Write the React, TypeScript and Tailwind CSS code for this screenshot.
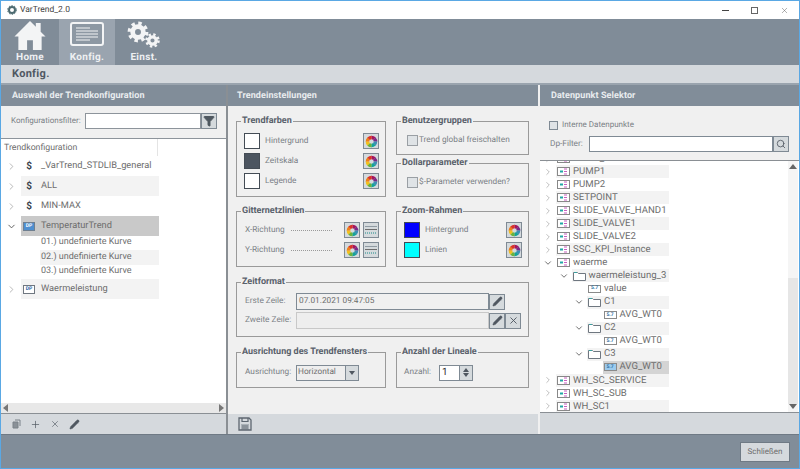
import React from "react";
import { Pencil, X, Plus, Search, ChevronRight, ChevronDown, Filter } from "lucide-react";

function Wheel() {
  const colors = ["#a3155f", "#7a2a86", "#3b8fb5", "#14a39a", "#6cb33f", "#f2c01e", "#ef7d1a", "#d8322b"];
  const c = 2 * Math.PI * 4;
  return (
    <svg width="13" height="13" viewBox="0 0 13 13">
      {colors.map((col, i) => (
        <circle key={i} cx="6.5" cy="6.5" r="4" fill="none" stroke={col} strokeWidth="3.6" strokeDasharray={`${c / 8 + 0.1} ${c}`} transform={`rotate(${i * 45 - 90} 6.5 6.5)`} />
      ))}
    </svg>
  );
}

function IconBtn({ children }: { children: React.ReactNode }) {
  return <div className="w-[16px] h-[16px] shrink-0 flex items-center justify-center bg-[#d5dadd] border border-[#7f8a94]">{children}</div>;
}

function LineIcon() {
  return (
    <svg width="12" height="10" viewBox="0 0 12 10">
      <path d="M0 1.5h12" stroke="#8f9aa2" />
      <path d="M0 4.5h12" stroke="#6d6d6d" />
      <path d="M0 8h12" stroke="#1f8a8a" strokeDasharray="1 1" />
    </svg>
  );
}

function Group({ title, className, inner = "", children }: { title: string; className: string; inner?: string; children: React.ReactNode }) {
  return (
    <fieldset className={`border border-[#9a9a9a] min-w-0 ${className}`}>
      <legend className="ml-[4px] px-[1px] text-[9px] leading-[10px] font-bold text-[#59616b]">{title}</legend>
      <div className={inner}>{children}</div>
    </fieldset>
  );
}

function Swatch({ color, label }: { color: string; label: string }) {
  return (
    <div className="flex items-center h-[20px] pl-[7px] pr-[6px]">
      <div className="w-[16px] h-[16px] border border-[#444c55]" style={{ background: color }} />
      <span className="ml-[5px] flex-1 text-[#7a7f85] text-[8.25px]">{label}</span>
      <IconBtn><Wheel /></IconBtn>
    </div>
  );
}

function Check({ label }: { label: string }) {
  return (
    <div className="flex items-center">
      <div className="w-[11px] h-[11px] bg-[#dfe3e6] border border-[#9a9fa4]" />
      <span className="ml-[1px] text-[8.25px] text-[#7a7f85]">{label}</span>
    </div>
  );
}

function Header({ text, className = "" }: { text: string; className?: string }) {
  return (
    <div className={`h-[21px] shrink-0 bg-[#818d99] flex items-center pt-[2px] text-[9px] font-bold tracking-[0.1px] text-[#e9ecef] ${className}`}>
      {text}
    </div>
  );
}

function Dp({ active = true }: { active?: boolean }) {
  return (
    <span className={`inline-flex items-center justify-center w-[12px] h-[9px] border ${active ? "border-[#6f7f90] bg-[#4f8fd0] text-white" : "border-[#6f7780] bg-white text-[#2a5f9f]"} text-[5px] font-bold leading-none`}>DP</span>
  );
}

function Dollar() {
  return <span className="text-[10px] font-bold text-[#3f4650]">$</span>;
}

function LeftRow({ icon, label, open, bg }: { icon: React.ReactNode; label: string; open?: boolean; bg?: string }) {
  return (
    <div className="flex items-center h-[20px] shrink-0">
      <div className="w-[20px] flex justify-center">
        {open ? <ChevronDown size={11} strokeWidth={2} color="#555" /> : <ChevronRight size={11} strokeWidth={1.5} color="#999" />}
      </div>
      <div className={`w-[138px] h-[20px] flex items-center ${bg ?? ""}`}>
        <div className="w-[16px] flex justify-center">{icon}</div>
        <span className="ml-[4px] text-[9.25px] text-[#6d6d6d]">{label}</span>
      </div>
    </div>
  );
}

function SubRow({ label, bg }: { label: string; bg?: string }) {
  return (
    <div className={`ml-[39px] w-[119px] h-[14.4px] shrink-0 flex items-center pl-[1px] text-[9px] text-[#6d6d6d] ${bg ?? ""}`}>{label}</div>
  );
}

function StructIcon() {
  return (
    <svg width="13" height="9" viewBox="0 0 13 9" className="shrink-0">
      <rect x="0.5" y="0.5" width="12" height="8" fill="#fff" stroke="#888" />
      <path d="M3 4.5h3" stroke="#22a6a6" strokeWidth="2" />
      <path d="M7 2h3M7 4.5h3M7 7h3" stroke="#c65fc0" strokeWidth="1" />
    </svg>
  );
}

function FolderIcon() {
  return (
    <svg width="13" height="10" viewBox="0 0 13 10" className="shrink-0">
      <path d="M0.5 1.5h4l1 1h7v7h-12z" fill="#fff" stroke="#6f7780" />
      <path d="M1 1.5h3" stroke="#3aa0a0" />
    </svg>
  );
}

function ValueIcon({ selected }: { selected?: boolean }) {
  return (
    <span className={`inline-flex shrink-0 items-center justify-center w-[13px] h-[8px] border border-[#8a8a8a] ${selected ? "bg-[#9ccbee]" : "bg-white"} text-[#2a6f9f] text-[5px] font-bold leading-none`}>5.7</span>
  );
}

type DpRow = { label: string; indent: number; kind: "s" | "f" | "v"; open?: boolean; leaf?: boolean; bg?: boolean; sel?: boolean };

const dpRows: DpRow[] = [
  { label: "MODE_STATE", indent: 0, kind: "s" },
  { label: "PUMP1", indent: 0, kind: "s", bg: true },
  { label: "PUMP2", indent: 0, kind: "s" },
  { label: "SETPOINT", indent: 0, kind: "s", bg: true },
  { label: "SLIDE_VALVE_HAND1", indent: 0, kind: "s" },
  { label: "SLIDE_VALVE1", indent: 0, kind: "s", bg: true },
  { label: "SLIDE_VALVE2", indent: 0, kind: "s" },
  { label: "SSC_KPI_Instance", indent: 0, kind: "s", bg: true },
  { label: "waerme", indent: 0, kind: "s", open: true },
  { label: "waermeleistung_3", indent: 1, kind: "f", open: true, bg: true },
  { label: "value", indent: 2, kind: "v", leaf: true },
  { label: "C1", indent: 2, kind: "f", open: true, bg: true },
  { label: "AVG_WT0", indent: 3, kind: "v", leaf: true },
  { label: "C2", indent: 2, kind: "f", open: true, bg: true },
  { label: "AVG_WT0", indent: 3, kind: "v", leaf: true },
  { label: "C3", indent: 2, kind: "f", open: true, bg: true },
  { label: "AVG_WT0", indent: 3, kind: "v", leaf: true, sel: true },
  { label: "WH_SC_SERVICE", indent: 0, kind: "s", bg: true },
  { label: "WH_SC_SUB", indent: 0, kind: "s" },
  { label: "WH_SC1", indent: 0, kind: "s", bg: true },
];

function DpTreeRow({ r }: { r: DpRow }) {
  return (
    <div className="flex items-center h-[13.06px]" style={{ paddingLeft: r.indent * 15.5 }}>
      <div className="w-[16px] shrink-0 flex justify-center">
        {r.leaf ? null : r.open ? <ChevronDown size={10} strokeWidth={2} color="#555" /> : <ChevronRight size={10} strokeWidth={1.5} color="#999" />}
      </div>
      <div
        className={`h-[13.06px] flex items-center gap-[3px] pl-[1px] ${r.sel ? "bg-[#d4d4d4]" : r.bg ? "bg-[#f3f3f3]" : ""}`}
        style={{ width: 113 - r.indent * 15.5 }}
      >
        {r.kind === "s" ? <StructIcon /> : r.kind === "f" ? <FolderIcon /> : <ValueIcon selected={r.sel} />}
        <span className="text-[9.6px] text-[#6d6d6d] leading-none">{r.label}</span>
      </div>
    </div>
  );
}

function Gear({ size, r }: { size: number; r: number }) {
  const c = size / 2;
  const circ = 2 * Math.PI * r;
  return (
    <svg width={size} height={size} viewBox={`0 0 ${size} ${size}`}>
      <circle cx={c} cy={c} r={r} fill="none" stroke="#f3f4f5" strokeWidth={r * 0.42} strokeDasharray={`${circ / 16} ${circ / 16}`} />
      <circle cx={c} cy={c} r={r * 0.62} fill="none" stroke="#f3f4f5" strokeWidth={r * 0.55} />
    </svg>
  );
}

function Floppy({ size = 14, color = "#5d6670" }: { size?: number; color?: string }) {
  return (
    <svg width={size} height={size} viewBox="0 0 14 14">
      <path d="M1 1h10l2 2v10H1z" fill="none" stroke={color} strokeWidth="1.3" />
      <path d="M4 1v3.5h6V1" fill="none" stroke={color} strokeWidth="1.2" />
      <path d="M3 7h8v6H3z" fill={color} opacity="0.35" />
      <path d="M4 9h6M4 11h6" stroke={color} strokeWidth="0.8" />
    </svg>
  );
}

function CopyIcon() {
  return (
    <svg width="9" height="10" viewBox="0 0 9 10">
      <path d="M3 1h5v6" fill="none" stroke="#7a8289" />
      <path d="M1 3h5v6H1z" fill="#8a9198" stroke="#7a8289" />
    </svg>
  );
}

export default function App() {
  return (
    <div className="[font-family:Roboto,sans-serif] [text-rendering:geometricPrecision] whitespace-nowrap w-[800px] h-[469px] overflow-hidden flex flex-col bg-[#f0f0f0] border border-[#5aa8e4] text-[#6d6d6d]">
      {/* Title bar */}
      <div className="h-[18px] bg-white flex items-center shrink-0">
        <svg width="10" height="10" viewBox="0 0 10 10" className="ml-[6px]">
          <circle cx="5" cy="5" r="3" fill="none" stroke="#4c6a70" strokeWidth="2" />
          <circle cx="5" cy="5" r="4.4" fill="none" stroke="#4c6a70" strokeWidth="1" strokeDasharray="1.4 1.4" />
        </svg>
        <span className="ml-[3px] text-[8.5px] text-[#444]">VarTrend_2.0</span>
        <div className="ml-auto flex items-center gap-[22px] pr-[10px]">
          <div className="w-[7px] h-px bg-[#444]" />
          <div className="w-[7px] h-[7px] border border-[#666]" />
          <X size={9} strokeWidth={1.2} color="#555" />
        </div>
      </div>

      {/* Toolbar */}
      <div className="h-[46px] bg-[#808c98] flex shrink-0 text-[#eef0f2] text-[10px] font-bold tracking-[0.3px]">
        <div className="w-[58px] flex flex-col items-center">
          <svg width="34" height="32" viewBox="0 0 34 33" className="mt-[1px]">
            <path d="M17 1 L1 17 L5 17 L5 31 L14 31 L14 21 L20 21 L20 31 L29 31 L29 17 L33 17 L28 12 L28 3 L23 3 L23 7 Z" fill="#f3f4f5" />
          </svg>
          <span className="leading-[11px]">Home</span>
        </div>
        <div className="w-[56px] bg-[#9aa4af] flex flex-col items-center">
          <svg width="34" height="25" viewBox="0 0 34 25" className="mt-[3px]">
            <rect x="1" y="1" width="32" height="22" rx="2" fill="#8d98a3" stroke="#f3f4f5" strokeWidth="2" />
            <path d="M6 6h14M6 9h22M6 12h22M6 15h22M6 18h14" stroke="#f3f4f5" strokeWidth="1" />
          </svg>
          <span className="leading-[11px] mt-[5px]">Konfig.</span>
        </div>
        <div className="w-[58px] flex flex-col items-center">
          <div className="relative w-[34px] h-[32px] mt-[1px]">
            <div className="absolute left-[-1px] top-0"><Gear size={24} r={8.6} /></div>
            <div className="absolute left-[17px] top-[12px]"><Gear size={17} r={6} /></div>
          </div>
          <span className="leading-[11px]">Einst.</span>
        </div>
      </div>

      {/* Page title */}
      <div className="h-[20px] bg-[#d5d9dd] border-b-2 border-[#9aa4ae] flex items-center pl-[11px] pt-[1px] text-[11px] font-bold tracking-[0.3px] text-[#4f5762] shrink-0">Konfig.</div>

      {/* Panels */}
      <div className="flex h-[349px] shrink-0">
        {/* Left */}
        <div className="w-[225px] flex flex-col border-r-2 border-[#8a8f94] box-content shrink-0">
          <Header text="Auswahl der Trendkonfiguration" className="pl-[11px]" />
          <div className="h-[32px] flex items-center pl-[10px] pb-[2px] shrink-0">
            <span className="text-[8px] text-[#7a7f85] w-[74px]">Konfigurationsfilter:</span>
            <div className="w-[116px] h-[16px] bg-white border border-[#8d949b]" />
            <div className="w-[16px] h-[16px] bg-[#d5dadd] border border-[#7f8a94] flex items-center justify-center">
              <Filter size={12} fill="#4f5860" color="#4f5860" />
            </div>
          </div>
          <div className="flex-1 bg-white border-t border-[#8d949b] flex flex-col">
            <div className="h-[17px] w-[157px] border-r border-[#e4e4e4] pl-[3px] text-[8.75px] leading-[18px] text-[#6d6d6d] shrink-0">Trendkonfiguration</div>
            <LeftRow icon={<Dollar />} label="_VarTrend_STDLIB_general" />
            <LeftRow icon={<Dollar />} label="ALL" bg="bg-[#f3f3f3]" />
            <LeftRow icon={<Dollar />} label="MIN-MAX" />
            <LeftRow icon={<Dp />} label="TemperaturTrend" open bg="bg-[#c9c9c9]" />
            <SubRow label="01.) undefinierte Kurve" />
            <SubRow label="02.) undefinierte Kurve" bg="bg-[#f3f3f3]" />
            <SubRow label="03.) undefinierte Kurve" />
            <LeftRow icon={<Dp active={false} />} label="Waermeleistung" bg="bg-[#f3f3f3]" />
            <div className="flex-1" />
            <div className="h-[10px] bg-[#e8e8e8] flex items-center justify-between px-[2px] shrink-0">
              <span className="w-0 h-0 border-y-[4px] border-y-transparent border-r-[5px] border-r-[#777]" />
              <span className="w-0 h-0 border-y-[4px] border-y-transparent border-l-[5px] border-l-[#777]" />
            </div>
          </div>
          <div className="h-[21px] bg-[#d5d9dd] border-t border-[#8a8f94] flex items-center pl-[11px] gap-[9px] shrink-0">
            <CopyIcon />
            <Plus size={11} strokeWidth={1.5} color="#4f5760" />
            <X size={10} strokeWidth={1.5} color="#4f5760" />
            <Pencil size={11} fill="#4f5760" color="#4f5760" strokeWidth={1} />
          </div>
        </div>

        {/* Middle */}
        <div className="w-[310px] flex flex-col shrink-0">
          <Header text="Trendeinstellungen" className="pl-[9px]" />
          <div className="flex-1 pl-[8px] pr-[9px] flex flex-col text-[8.25px]">
            <div className="grid grid-cols-[150px_133px] gap-x-[10px] mt-[10px]">
              <Group title="Trendfarben" className="row-span-2 h-[81px]" inner="pt-[5px]">
                <Swatch color="#fff" label="Hintergrund" />
                <Swatch color="#4c5560" label="Zeitskala" />
                <Swatch color="#fff" label="Legende" />
              </Group>
              <Group title="Benutzergruppen" className="h-[39px]" inner="pl-[10px] pt-[8px]">
                <Check label="Trend global freischalten" />
              </Group>
              <Group title="Dollarparameter" className="h-[39px] mt-[3px]" inner="pl-[10px] pt-[8px]">
                <Check label="$-Parameter verwenden?" />
              </Group>
            </div>
            <div className="grid grid-cols-[150px_133px] gap-x-[10px] mt-[9px]">
              <Group title="Gitternetzlinien" className="h-[61px]" inner="pt-[4px]">
                {["X-Richtung", "Y-Richtung"].map((t) => (
                  <div key={t} className="flex items-center h-[20px] pl-[8px] pr-[6px]">
                    <span className="w-[46px] text-[#7a7f85]">{t}</span>
                    <div className="w-[41px] border-t border-dotted border-[#9a9a9a]" />
                    <div className="ml-auto flex gap-[3px]">
                      <IconBtn><Wheel /></IconBtn>
                      <IconBtn><LineIcon /></IconBtn>
                    </div>
                  </div>
                ))}
              </Group>
              <Group title="Zoom-Rahmen" className="h-[61px]" inner="pt-[4px]">
                <Swatch color="#0000ff" label="Hintergrund" />
                <Swatch color="#00ffff" label="Linien" />
              </Group>
            </div>
            <Group title="Zeitformat" className="mt-[10px] h-[60px] w-[293px]" inner="pl-[8px] pt-[5px]">
              <div className="flex items-center h-[19px]">
                <span className="w-[51px] text-[#7a7f85]">Erste Zeile:</span>
                <div className="w-[193px] h-[17px] bg-[#f0f0f0] border border-[#7f8a94] flex items-center pl-[2px] text-[#6d6d6d]">07.01.2021 09:47:05</div>
                <IconBtn><Pencil size={11} fill="#4f5760" color="#4f5760" strokeWidth={1} /></IconBtn>
              </div>
              <div className="flex items-center h-[19px]">
                <span className="w-[51px] text-[#7a7f85]">Zweite Zeile:</span>
                <div className="w-[193px] h-[17px] bg-[#eee] border border-[#c8c8c8]" />
                <IconBtn><Pencil size={11} fill="#4f5760" color="#4f5760" strokeWidth={1} /></IconBtn>
                <IconBtn><X size={11} color="#4f5760" /></IconBtn>
              </div>
            </Group>
            <div className="grid grid-cols-[150px_133px] gap-x-[10px] mt-[10px]">
              <Group title="Ausrichtung des Trendfensters" className="h-[41px]" inner="pl-[8px] pt-[5px]">
                <div className="flex items-center h-[21px]">
                  <span className="w-[51px] text-[#7a7f85]">Ausrichtung:</span>
                  <div className="w-[63px] h-[16px] bg-[#eee] border border-[#7f8a94] flex items-center pl-[1px] text-[#6d6d6d]">
                    <span className="flex-1">Horizontal</span>
                    <span className="w-[13px] h-[14px] bg-[#d5dadd] border-l border-[#7f8a94] flex items-center justify-center">
                      <span className="w-0 h-0 border-x-[3.5px] border-x-transparent border-t-[4px] border-t-[#4f5760]" />
                    </span>
                  </div>
                </div>
              </Group>
              <Group title="Anzahl der Lineale" className="h-[41px]" inner="pl-[7px] pt-[5px]">
                <div className="flex items-center h-[21px]">
                  <span className="w-[35px] text-[#7a7f85]">Anzahl:</span>
                  <div className="w-[21px] h-[16px] bg-white border border-[#7f8a94] flex items-center pl-[2px] text-[10px] text-[#333]">1</div>
                  <div className="w-[13px] h-[16px] bg-[#d5dadd] border border-l-0 border-[#7f8a94] flex flex-col items-center justify-center gap-[1px]">
                    <span className="w-0 h-0 border-x-[3.5px] border-x-transparent border-b-[4px] border-b-[#4f5760]" />
                    <span className="w-0 h-0 border-x-[3.5px] border-x-transparent border-t-[4px] border-t-[#4f5760]" />
                  </div>
                </div>
              </Group>
            </div>
          </div>
          <div className="h-[20px] bg-[#d5d9dd] flex items-center pl-[10px] shrink-0">
            <Floppy />
          </div>
        </div>

        {/* Right */}
        <div className="w-[259px] flex flex-col ml-[2px] shrink-0">
          <Header text="Datenpunkt Selektor" className="pl-[11px]" />
          <div className="h-[54px] shrink-0 pl-[9px] pt-[13px]">
            <div className="flex items-center">
              <div className="w-[9px] h-[9px] bg-[#dfe3e6] border border-[#7f8a94]" />
              <span className="ml-[4px] text-[8px] text-[#7a7f85]">Interne Datenpunkte</span>
            </div>
            <div className="flex items-center mt-[5px]">
              <span className="w-[40px] text-[8.25px] text-[#7a7f85] pl-[1px]">Dp-Filter:</span>
              <div className="w-[184px] h-[16px] bg-white border border-[#7f8a94]" />
              <div className="w-[16px] h-[16px] bg-[#d5dadd] border border-[#7f8a94] flex items-center justify-center">
                <Search size={10} color="#4f5760" />
              </div>
            </div>
          </div>
          <div className="h-[253px] shrink-0 bg-white border-y border-[#8a8f94] flex overflow-hidden">
            <div className="w-[248px] overflow-hidden">
              <div className="mt-[-9px]">
                {dpRows.map((r, i) => <DpTreeRow key={i} r={r} />)}
              </div>
            </div>
            <div className="w-[10px] flex flex-col items-center bg-[#f5f5f5]">
              <span className="mt-[3px] w-0 h-0 border-x-[4px] border-x-transparent border-b-[5px] border-b-[#666]" />
              <div className="flex-1" />
              <div className="w-full h-[126px] bg-[#e6e6e6]" />
              <span className="mb-[3px] w-0 h-0 border-x-[4px] border-x-transparent border-t-[5px] border-t-[#666]" />
            </div>
          </div>
          <div className="flex-1 bg-[#d5d9dd]" />
        </div>
      </div>

      {/* Bottom */}
      <div className="flex-1 bg-[#818d99] border-t border-[#6f7a85] flex justify-end items-start pt-[7px] pr-[9px]">
        <div className="w-[50px] h-[20px] bg-[#d5d9dd] border border-[#6f7a85] flex items-center justify-center text-[8px] text-[#6d6d6d]">Schließen</div>
      </div>
    </div>
  );
}
